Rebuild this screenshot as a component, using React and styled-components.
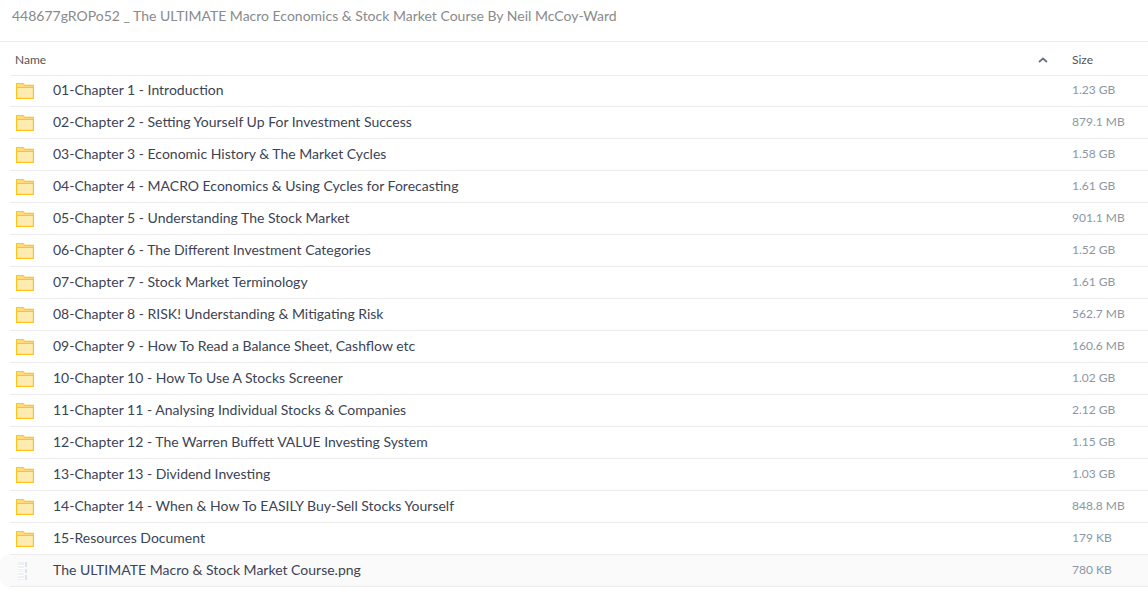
import React from 'react'
import styled, { createGlobalStyle } from 'styled-components'

const GlobalStyle = createGlobalStyle`
  html, body {
    margin: 0;
    padding: 0;
    background: #fff;
    font-family: Lato, "Open Sans", sans-serif;
  }
`

const items = [
  ['01-Chapter 1 - Introduction', '1.23 GB'],
  ['02-Chapter 2 - Setting Yourself Up For Investment Success', '879.1 MB'],
  ['03-Chapter 3 - Economic History & The Market Cycles', '1.58 GB'],
  ['04-Chapter 4 - MACRO Economics & Using Cycles for Forecasting', '1.61 GB'],
  ['05-Chapter 5 - Understanding The Stock Market', '901.1 MB'],
  ['06-Chapter 6 - The Different Investment Categories', '1.52 GB'],
  ['07-Chapter 7 - Stock Market Terminology', '1.61 GB'],
  ['08-Chapter 8 - RISK! Understanding & Mitigating Risk', '562.7 MB'],
  ['09-Chapter 9 - How To Read a Balance Sheet, Cashflow etc', '160.6 MB'],
  ['10-Chapter 10 - How To Use A Stocks Screener', '1.02 GB'],
  ['11-Chapter 11 - Analysing Individual Stocks & Companies', '2.12 GB'],
  ['12-Chapter 12 - The Warren Buffett VALUE Investing System', '1.15 GB'],
  ['13-Chapter 13 - Dividend Investing', '1.03 GB'],
  ['14-Chapter 14 - When & How To EASILY Buy-Sell Stocks Yourself', '848.8 MB'],
  ['15-Resources Document', '179 KB'],
]

const FolderIcon = () => (
  <svg width="18" height="16" viewBox="0 0 18 16">
    <path d="M0.6 15.4V0.6H7L8.6 2.4H17.4V15.4Z" fill="#ffeab0" stroke="#fbc61a" strokeWidth="1.2" />
    <path d="M1.2 1.2H6.7L8.3 3H16.8V4H1.2Z" fill="#fedc7c" />
    <path d="M1 4.5H17" stroke="#fbc61a" />
  </svg>
)

const FileIcon = () => (
  <svg width="12" height="18" viewBox="-2 0 12 18">
    <rect x="0" y="0" width="6" height="18" fill="#eef0f5" />
    <path d="M0 3.5H6M0 6.5H6M0 8.5H6M0 10.5H6M0 13.5H6M0 16.5H6" stroke="#fff" />
    <path d="M8 0V5M8 7V11M8 13V18" stroke="#dde3ec" strokeWidth="2" />
  </svg>
)

const App = () => {
  return (
    <Page>
      <GlobalStyle />
      <Title>448677gROPo52 _ The ULTIMATE Macro Economics &amp; Stock Market Course By Neil McCoy-Ward</Title>
      <HeaderRow>
        <HeaderName>Name</HeaderName>
        <SortArrow>
          <svg width="10" height="6" viewBox="0 0 10 6">
            <path d="M1 5L5 1.5L9 5" fill="none" stroke="#6b7280" strokeWidth="1.8" />
          </svg>
        </SortArrow>
        <HeaderSize>Size</HeaderSize>
      </HeaderRow>
      {items.map(([name, size]) => (
        <Row key={name}>
          <RowInner>
            <IconCell><FolderIcon /></IconCell>
            <Name>{name}</Name>
            <Size>{size}</Size>
          </RowInner>
        </Row>
      ))}
      <Row $hover>
        <RowInner>
          <IconCell><FileIcon /></IconCell>
          <Name>The ULTIMATE Macro &amp; Stock Market Course.png</Name>
          <Size>780 KB</Size>
        </RowInner>
      </Row>
    </Page>
  )
}

export default App

const Page = styled.div`
  width: 1148px;
  height: 611px;
  overflow: hidden;
  background: #fff;
`

const Title = styled.div`
  height: 41px;
  padding-left: 12px;
  font-size: 14px;
  line-height: 32px;
  color: #8a8a8a;
  border-bottom: 1px solid #ececec;
  white-space: nowrap;
`

const HeaderRow = styled.div`
  display: flex;
  align-items: center;
  height: 34px;
  padding-top: 2px;
  box-sizing: border-box;
  margin: 0 0 -1px 10px;
  border-bottom: 1px solid #ececec;
  font-size: 12px;
  color: #555;
`

const HeaderName = styled.div`
  flex: 1;
  padding-left: 5px;
`

const SortArrow = styled.div`
  display: flex;
  width: 10px;
  margin-right: 24px;
`

const HeaderSize = styled.div`
  width: 76px;
`

const Row = styled.div`
  padding-left: 10px;
  border-radius: 8px 0 0 8px;
  background: ${props => (props.$hover ? '#fafafb' : 'transparent')};
`

const RowInner = styled.div`
  display: flex;
  align-items: center;
  height: 29px;
  padding-bottom: 2px;
  border-bottom: 1px solid #ececec;
`

const IconCell = styled.div`
  display: flex;
  width: 43px;
  padding: 3px 0 0 6px;
  box-sizing: border-box;
`

const Name = styled.div`
  flex: 1;
  font-size: 14px;
  color: #3c4354;
  white-space: nowrap;
`

const Size = styled.div`
  width: 76px;
  font-size: 12px;
  color: #8c96a6;
`
